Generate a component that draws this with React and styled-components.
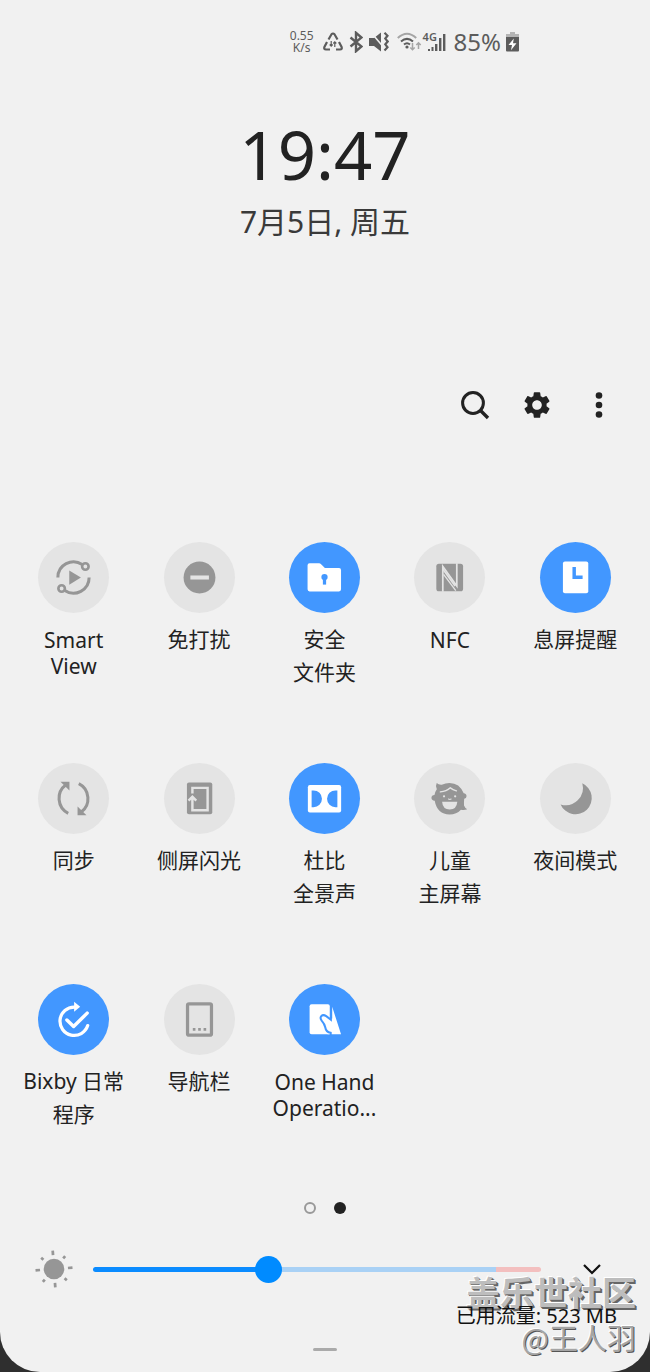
import { useState } from 'react';
import styled, { createGlobalStyle } from 'styled-components';
import { MdSettings } from 'react-icons/md';

const GlobalStyle = createGlobalStyle`
	* {
		box-sizing: border-box;
	}

	body {
		margin: 0;
		background: #2f2f2f;
		color: #222;
		font-family: 'Noto Sans', 'Noto Sans CJK SC', sans-serif;
	}

	button {
		padding: 0;
		border: 0;
		background: none;
		color: inherit;
		font: inherit;
		cursor: pointer;
	}

	svg {
		display: block;
	}
`;

const OFF = '#e4e4e4';
const ON = '#4297ff';

const Panel = styled.main`
	position: relative;
	display: flex;
	flex-direction: column;
	min-height: 100vh;
	background: #f1f1f1;
	border-radius: 0 0 40px 40px;
	overflow: hidden;
`;

const StatusBar = styled.div`
	display: flex;
	align-items: center;
	justify-content: flex-end;
	height: 84px;
	padding-right: 131px;
	color: #5c5c5c;
`;

const Speed = styled.div`
	display: flex;
	flex-direction: column;
	margin-right: 9px;
	font-size: 12px;
	line-height: 12px;
	text-align: center;
`;

const StatusIcon = styled.svg`
	flex: none;
	margin-right: ${({ $gap }) => $gap}px;
`;

const Network = styled.div`
	position: relative;
	width: 23px;
	height: 20px;
	margin-right: 8px;
`;

const NetworkType = styled.span`
	position: absolute;
	top: -1px;
	left: 0;
	font-size: 11px;
	font-weight: 600;
	line-height: 11px;
`;

const Percent = styled.div`
	margin-right: 5px;
	font-size: 24px;
	line-height: 24px;
`;

const Header = styled.header`
	display: flex;
	flex-direction: column;
	align-items: center;
	padding-top: 30px;
`;

const Clock = styled.time`
	font-size: 67px;
	line-height: 80px;
`;

const DateText = styled.div`
	margin-top: 8px;
	color: #3a3a3a;
	font-size: 30px;
	line-height: 40px;
`;

const Toolbar = styled.nav`
	display: flex;
	justify-content: flex-end;
	gap: 26px;
	margin-top: 145px;
	padding-right: 33px;
`;

const ToolButton = styled.button`
	display: flex;
	align-items: center;
	justify-content: center;
	width: 36px;
	height: 36px;
`;

const Tiles = styled.section`
	display: grid;
	grid-template-columns: repeat(5, 1fr);
	grid-auto-rows: 221px;
	margin-top: 119px;
	padding: 0 12px 0 11px;
`;

const TileButton = styled.button`
	display: flex;
	flex-direction: column;
	align-items: center;
`;

const Disc = styled.span`
	width: 71px;
	height: 71px;
	border-radius: 50%;
	background: ${({ $on }) => ($on ? ON : OFF)};
	color: ${({ $on }) => ($on ? '#fff' : '#969696')};
`;

const Label = styled.span`
	margin-top: ${({ $latin }) => ($latin ? 14 : 10)}px;
	font-size: 21px;
	line-height: ${({ $latin }) => ($latin ? 26 : 33)}px;
	white-space: pre-line;
`;

const Pager = styled.div`
	display: flex;
	justify-content: center;
	gap: 18px;
	margin-top: -3px;
`;

const PageDot = styled.button`
	width: 12px;
	height: 12px;
	border: ${({ $active }) => ($active ? '0' : '2px solid #999')};
	border-radius: 50%;
	background: ${({ $active }) => ($active ? '#222' : 'transparent')};
`;

const Brightness = styled.div`
	display: flex;
	align-items: center;
	height: 40px;
	margin-top: 35px;
	padding: 0 40px 0 34px;
`;

const Slider = styled.input`
	flex: 1;
	min-width: 0;
	height: 28px;
	margin: 0 33px 0 19px;
	background: none;
	appearance: none;

	&::-webkit-slider-runnable-track {
		height: 5px;
		border-radius: 3px;
		background: linear-gradient(
			to right,
			#0a8bff var(--fill),
			#a9d1f5 var(--fill),
			#a9d1f5 90%,
			#f3bfbf 90%
		);
	}

	&::-webkit-slider-thumb {
		width: 27px;
		height: 27px;
		margin-top: -11px;
		border-radius: 50%;
		background: #008bff;
		appearance: none;
	}
`;

const Usage = styled.div`
	position: relative;
	z-index: 1;
	align-self: flex-end;
	margin-top: 14px;
	padding-right: 33px;
	color: #111;
	font-size: 20px;
	line-height: 26px;
`;

const Handle = styled.div`
	align-self: center;
	width: 24px;
	height: 3px;
	margin-top: 19px;
	border-radius: 2px;
	background: #aaa;
`;

const Watermark = styled.div`
	position: absolute;
	right: 14px;
	bottom: 13px;
	color: #bdbdbd;
	font-family: 'Noto Sans CJK SC', sans-serif;
	text-align: right;
	pointer-events: none;
`;

const Community = styled.div`
	font-size: 34px;
	font-weight: 700;
	line-height: 46px;
	text-shadow: -1px -1px 0 #fff, 1px 1px 0 #666, 2px 2px 0 #666;
`;

const Author = styled.div`
	color: #a5a5a5;
	font-size: 29px;
	line-height: 44px;
	text-shadow: -1px -1px 0 #fff, 1px 1px 0 #555;
`;

const SmartViewIcon = () => (
	<g fill="none" stroke="currentColor" strokeWidth="3">
		<path d="M19.6 35A15.4 15.4 0 0 1 43.6 22.2M50.4 35A15.4 15.4 0 0 1 26.4 47.8" />
		<circle cx="46.7" cy="24.2" r="3.2" strokeWidth="2.6" />
		<circle cx="23.3" cy="45.8" r="3.2" strokeWidth="2.6" />
		<path d="M30.8 28v14.2L42.3 35z" fill="currentColor" stroke="none" />
	</g>
);

const DisturbIcon = () => (
	<>
		<circle cx="35" cy="35" r="15.7" fill="currentColor" />
		<path d="M26 33h18.3v4H26z" fill={OFF} />
	</>
);

const FolderIcon = () => (
	<>
		<path
			d="M20.3 21h9.4q1 0 1.7.7l4 4h13.9q2 0 2 2v19q0 2-2 2h-29q-2 0-2-2V23q0-2 2-2z"
			fill="currentColor"
		/>
		<circle cx="35" cy="34.6" r="3.1" fill={ON} />
		<path d="M33.4 35h3.2v7h-3.2z" fill={ON} />
	</>
);

const NfcIcon = () => (
	<>
		<rect x="22" y="21.4" width="26.4" height="27.2" rx="2.5" fill="currentColor" />
		<g fill="none" stroke={OFF} strokeWidth="1.7">
			<path d="M28.4 49V24l13.8 19.5V21" />
			<path d="M29.2 32L41.2 48" strokeWidth="1.3" />
			<path d="M28.4 26.5L40.5 43.5" />
		</g>
	</>
);

const AlwaysOnIcon = () => (
	<>
		<rect x="22.6" y="19.3" width="25" height="31.3" rx="2" fill="currentColor" />
		<path d="M32 24.7h3.4v8.4h6.6v3.4H32z" fill={ON} />
	</>
);

const SyncIcon = () => (
	<g fill="none" stroke="currentColor" strokeWidth="3">
		<path d="M29.8 49.6A16.5 16.5 0 0 1 27.6 21.5M40.2 20.4A16.5 16.5 0 0 1 42.4 48.5" />
		<path
			d="M22.2 18.6h8.8V27zM47.8 51.4H39V43z"
			fill="currentColor"
			stroke="none"
		/>
	</g>
);

const EdgeIcon = () => (
	<>
		<rect x="22.6" y="19.3" width="25" height="31.3" rx="2" fill="currentColor" />
		<path
			d="M28 30v-5.5h15v22H28V35M24.2 37l3.8-3.8 3.800 3.800"
			fill="none"
			stroke={OFF}
			strokeWidth="2.400"
		/>
	</>
);

const DolbyIcon = () => (
	<>
		<rect x="18.6" y="21.8" width="32.8" height="27" rx="2" fill="currentColor" />
		<path
			d="M22.3 27h1.9a8.300 8.300 0 0 1 0 16.600h-1.9zM47.700 27h-1.900a8.300 8.300 0 0 0 0 16.600h1.900z"
			fill={ON}
		/>
	</>
);

const KidsIcon = () => (
	<>
		<path
			d="M22.4 19.8q2 2 5 1.7Q31 19.600 35 19.600q10 0 14 10.300 2.800.4 2.800 2.800 0 2.200-2.300 2.600-.4 4-.2 6.500 1 2.600 3.200 3.700-3 1.200-6.200.5Q42 50.700 35 50.700q-12 0-14.600-13.500-3.200-.2-3.200-2.900 0-2.400 3-2.700.6-3.300 2.300-5.600-1.700-3-.1-6.200z"
			fill="currentColor"
		/>
		<g fill="none" stroke={OFF} strokeWidth="1.400" strokeLinecap="round">
			<path d="M26 28.500q6-.5 9.800-4 2.500 2 6 3" />
			<path d="M34 35.500q1.300.8 2.600 0" strokeWidth="1" />
		</g>
		<circle cx="29.600" cy="32.800" r="1.100" fill={OFF} />
		<circle cx="40.600" cy="32.800" r="1.100" fill={OFF} />
		<path d="M27.700 38.200h15q-.6 7.600-7.500 7.600t-7.500-7.600z" fill={OFF} />
	</>
);

const MoonIcon = () => (
	<path d="M41.700 20A16 16 0 1 1 20.300 40.800 17 17 0 0 0 41.700 20z" fill="currentColor" />
);

const RoutineIcon = () => (
	<g
		fill="none"
		stroke="currentColor"
		strokeWidth="3.200"
		strokeLinecap="round"
		strokeLinejoin="round"
	>
		<path d="M36 22.700A14 14 0 1 0 49 41" />
		<path d="M28.500 35.500l6.600 6.300L48.500 28.700" strokeWidth="3.400" />
		<path d="M35.600 17.400v10l6-4.900z" fill="currentColor" stroke="none" />
	</g>
);

const NavBarIcon = () => (
	<>
		<rect
			x="23.200"
			y="19.500"
			width="23.600"
			height="31"
			rx="1.500"
			fill="none"
			stroke="currentColor"
			strokeWidth="3.200"
		/>
		<path
			d="M28.400 43.400h2.600V46h-2.600zM33.700 43.400h2.600V46h-2.600zM39 43.400h2.600V46H39z"
			fill="currentColor"
		/>
	</>
);

const OneHandIcon = () => (
	<>
		<path
			d="M22.300 20h16q2 0 2 2v27.500h-18q-2 0-2-2V22q0-2 2-2z"
			fill="currentColor"
		/>
		<path d="M38 34h4.600V22.500l8.700 27.100H38z" fill="currentColor" />
		<path
			d="M41.300 19v16.200l-4.600-3.500q-3-2-4.900 0-1.500 2 .4 4.400 3 3.400 3.600 6.800.7 4.600 5.300 5.200v3"
			fill="none"
			stroke={ON}
			strokeWidth="2"
		/>
	</>
);

const TILES = [
	{ label: 'Smart\nView', icon: SmartViewIcon, latin: true },
	{ label: '免打扰', icon: DisturbIcon },
	{ label: '安全\n文件夹', icon: FolderIcon, on: true },
	{ label: 'NFC', icon: NfcIcon, latin: true },
	{ label: '息屏提醒', icon: AlwaysOnIcon, on: true },
	{ label: '同步', icon: SyncIcon },
	{ label: '侧屏闪光', icon: EdgeIcon },
	{ label: '杜比\n全景声', icon: DolbyIcon, on: true },
	{ label: '儿童\n主屏幕', icon: KidsIcon },
	{ label: '夜间模式', icon: MoonIcon },
	{ label: 'Bixby 日常\n程序', icon: RoutineIcon, on: true },
	{ label: '导航栏', icon: NavBarIcon },
	{ label: 'One Hand\nOperatio...', icon: OneHandIcon, on: true, latin: true },
];

const Tile = ({ label, icon: Icon, on, latin }) => (
	<TileButton type="button" aria-pressed={Boolean(on)}>
		<Disc $on={on}>
			<svg width="71" height="71" viewBox="0 0 70 70" aria-hidden="true">
				<Icon />
			</svg>
		</Disc>
		<Label $latin={latin}>{label}</Label>
	</TileButton>
);

const Status = () => (
	<StatusBar>
		<Speed>
			<span>0.55</span>
			<span>K/s</span>
		</Speed>
		<StatusIcon $gap={6} width="20" height="20" viewBox="0 0 20 20">
			<g fill="none" stroke="currentColor" strokeWidth="2.200">
				<path d="M5.500 7.500L8.500 2.300q1.500-1.600 3 0l3 5.200M4 10L1.400 15q-.8 2.500 1.600 2.500h4M16 10l2.600 5q.8 2.500-1.600 2.500h-4" />
				<path
					d="M8.200 9v5M11.800 10v5M6.700 12.500l1.500 1.700 1.500-1.700M10.300 11.500l1.500-1.700 1.500 1.700"
					strokeWidth="1.200"
				/>
			</g>
		</StatusIcon>
		<StatusIcon $gap={6} width="14" height="22" viewBox="0 0 14 22">
			<path
				d="M1.500 6.500l11 9-5.500 4.700V1.800l5.500 4.700-11 9"
				fill="none"
				stroke="currentColor"
				strokeWidth="2.400"
			/>
		</StatusIcon>
		<StatusIcon $gap={8} width="20" height="20" viewBox="0 0 20 20">
			<path d="M0 6h5l7-5.500v19L5 14H0z" fill="currentColor" />
			<path d="M2 .5l12 14" stroke="#f1f1f1" strokeWidth="1.600" />
			<path
				d="M15.500.8l3 3-2.200 2.800 2.400 2.900-2.400 2.900 2.200 2.900-3 3.200"
				fill="none"
				stroke="currentColor"
				strokeWidth="2.200"
			/>
		</StatusIcon>
		<StatusIcon $gap={1} width="25" height="20" viewBox="0 0 25 20">
			<g fill="none" strokeWidth="2">
				<path d="M.8 6Q10-2.600 19.200 6" stroke="#a5a5a5" />
				<path d="M4 9.500q6-5.200 12 0M7 12.500q3-2.600 6 0" stroke="currentColor" />
				<path
					d="M15.500 11v6.500M13.300 15.500l2.200 2.200 2.200-2.200M21.500 17v-6M19.300 13l2.200-2.200L23.700 13"
					stroke="#a5a5a5"
					strokeWidth="1.500"
				/>
			</g>
			<circle cx="10" cy="15" r="1.600" fill="currentColor" />
		</StatusIcon>
		<Network>
			<NetworkType>4G</NetworkType>
			<svg width="23" height="20" viewBox="0 0 23 20">
				<path
					d="M5 17h2v2H5zM8.500 15h2v4h-2zM12 12h2.400v7H12zM16 6h2.400v13H16zM20 2h2.400v17H20z"
					fill="currentColor"
				/>
			</svg>
		</Network>
		<Percent>85%</Percent>
		<StatusIcon $gap={0} width="13" height="20" viewBox="0 0 13 20">
			<path d="M4 0h5v2h4v4H0V2h4z" fill="#b5b5b5" />
			<path d="M0 5h13v13.500q0 1-1 1H1q-1 0-1-1z" fill="currentColor" />
			<path d="M7.800 6.500L2.500 13H6l-1 5.200 5.500-7H7z" fill="#fff" />
		</StatusIcon>
	</StatusBar>
);

const RAYS = [0, 45, 90, 135, 180, 225, 270, 315];

const App = () => {
	const [level, setLevel] = useState(385);

	return (
		<>
			<GlobalStyle />
			<Panel>
				<Status />
				<Header>
					<Clock>19:47</Clock>
					<DateText>7月5日, 周五</DateText>
				</Header>
				<Toolbar>
					<ToolButton type="button" aria-label="搜索">
						<svg width="30" height="30" viewBox="0 0 30 30">
							<g fill="none" stroke="currentColor" strokeWidth="3">
								<circle cx="13" cy="13" r="10.400" />
								<path d="M20.500 20.500l7.500 7.500" strokeWidth="3.400" />
							</g>
						</svg>
					</ToolButton>
					<ToolButton type="button" aria-label="设置">
						<MdSettings size={32} />
					</ToolButton>
					<ToolButton type="button" aria-label="更多">
						<svg width="8" height="28" viewBox="0 0 8 28" fill="currentColor">
							<circle cx="4" cy="4.500" r="3.300" />
							<circle cx="4" cy="14" r="3.300" />
							<circle cx="4" cy="23.500" r="3.300" />
						</svg>
					</ToolButton>
				</Toolbar>
				<Tiles>
					{TILES.map((tile) => (
						<Tile key={tile.label} {...tile} />
					))}
				</Tiles>
				<Pager>
					<PageDot type="button" aria-label="1" />
					<PageDot type="button" aria-label="2" $active />
				</Pager>
				<Brightness>
					<svg width="40" height="40" viewBox="0 0 40 40" aria-hidden="true">
						<circle cx="20" cy="20" r="10.300" fill="#969696" />
						{RAYS.map((angle) => (
							<path
								key={angle}
								d={angle % 90 ? 'M20 3v3' : 'M20 1.500v4.500'}
								stroke="#969696"
								strokeWidth="2.700"
								transform={`rotate(${angle - 4} 20 20)`}
							/>
						))}
					</svg>
					<Slider
						type="range"
						aria-label="亮度"
						min="0"
						max="1000"
						value={level}
						style={{ '--fill': `${level / 10}%` }}
						onChange={({ target }) => setLevel(Number(target.value))}
					/>
					<ToolButton type="button" aria-label="展开">
						<svg width="20" height="12" viewBox="0 0 20 12">
							<path
								d="M2 2l8 8 8-8"
								fill="none"
								stroke="#111"
								strokeWidth="2.200"
							/>
						</svg>
					</ToolButton>
				</Brightness>
				<Usage>已用流量: 523 MB</Usage>
				<Handle />
				<Watermark>
					<Community>盖乐世社区</Community>
					<Author>@王人羽</Author>
				</Watermark>
			</Panel>
		</>
	);
};

export default App;
